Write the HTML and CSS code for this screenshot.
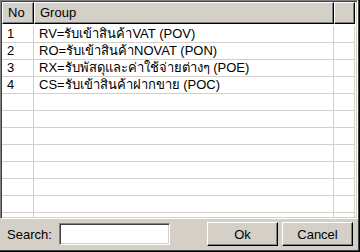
FILE: index.html
```html
<!DOCTYPE html>
<html lang="th">
  <head>
    <meta charset="UTF-8" />
    <meta name="viewport" content="width=device-width, initial-scale=1.0" />
    <title>Group</title>
    <link rel="stylesheet" href="styles.css">
  </head>

  <body>
    <div class="dialog">
      <div class="list">
        <div class="head">
          <div class="hcell no">No</div>
          <div class="hcell group">Group</div>
          <div class="hcell fill"></div>
        </div>
        <div id="rows" class="rows"></div>
      </div>

      <div class="bar">
        <label for="search">Search:</label>
        <input id="search" type="text" />
        <div class="buttons">
          <button>Ok</button>
          <button>Cancel</button>
        </div>
      </div>
    </div>

    <script>
      const groups = [
        "RV=รับเข้าสินค้าVAT (POV)",
        "RO=รับเข้าสินค้าNOVAT (PON)",
        "RX=รับพัสดุและค่าใช้จ่ายต่างๆ (POE)",
        "CS=รับเข้าสินค้าฝากขาย (POC)",
      ];
      const numRows = 12;

      // Fill the grid, empty rows after the data
      const rows = document.getElementById("rows");
      for (let i = 0; i < numRows; i++) {
        const row = document.createElement("div");
        row.className = "row";
        row.innerHTML =
          `<div class="cell no">${i < groups.length ? i + 1 : ""}</div>` +
          `<div class="cell group">${groups[i] || ""}</div>` +
          `<div class="cell fill"></div>`;
        rows.appendChild(row);
      }
    </script>
  </body>
</html>
```

FILE: styles.css
```css
body {
  margin: 0;
  font-family: "Liberation Sans", Arial, sans-serif;
  font-size: 13px;
  color: #000;
}

.dialog {
  width: 360px;
  height: 252px;
  box-sizing: border-box;
  background: #d4d0c8;
  border-right: 1px solid #000;
  border-bottom: 1px solid #000;
  box-shadow: inset -1px -1px 0 #404040;
  display: flex;
  flex-direction: column;
  overflow: hidden;
}

.list {
  width: 358px;
  height: 219px;
  box-sizing: border-box;
  background: #fff;
  border: 1px solid;
  border-color: #808080 #fff #fff #808080;
  box-shadow: inset 1px 1px 0 #404040, inset -1px -1px 0 #d4d0c8;
  padding: 1px;
  overflow: hidden;
}

.head {
  display: flex;
  height: 22px;
  margin-bottom: 2px;
}

.hcell {
  box-sizing: border-box;
  height: 22px;
  line-height: 20px;
  padding-left: 5px;
  background: #d4d0c8;
  border-top: 1px solid #fff;
  border-left: 1px solid #fff;
  border-right: 1px solid #000;
  border-bottom: 1px solid #000;
  box-shadow: inset -1px -1px 0 #808080;
}

.no {
  width: 32px;
}

.group {
  width: 300px;
}

.fill {
  width: 21px;
}

.row {
  display: flex;
  height: 17px;
}

.cell {
  box-sizing: border-box;
  height: 17px;
  line-height: 16px;
  border-right: 1px solid #d4d0c8;
  border-bottom: 1px solid #d4d0c8;
  white-space: nowrap;
  overflow: hidden;
}

.cell.no {
  padding-left: 5px;
}

.cell.group {
  padding-left: 5px;
}

.bar {
  flex: 1;
  display: flex;
  align-items: center;
  padding: 0 6px 2px 7px;
}

.bar label {
  width: 52px;
}

#search {
  width: 111px;
  height: 22px;
  box-sizing: border-box;
  margin: 0;
  padding: 0 3px;
  font: inherit;
  background: #fff;
  border: 1px solid;
  border-color: #808080 #fff #fff #808080;
  box-shadow: inset 1px 1px 0 #404040, inset -1px -1px 0 #d4d0c8;
  outline: none;
}

.buttons {
  margin-left: auto;
  display: flex;
  gap: 4px;
}

button {
  width: 71px;
  height: 24px;
  box-sizing: border-box;
  margin: 0;
  padding: 0;
  font: inherit;
  color: #000;
  background: #d4d0c8;
  border: 1px solid;
  border-color: #fff #000 #000 #fff;
  box-shadow: inset -1px -1px 0 #808080;
}
```
